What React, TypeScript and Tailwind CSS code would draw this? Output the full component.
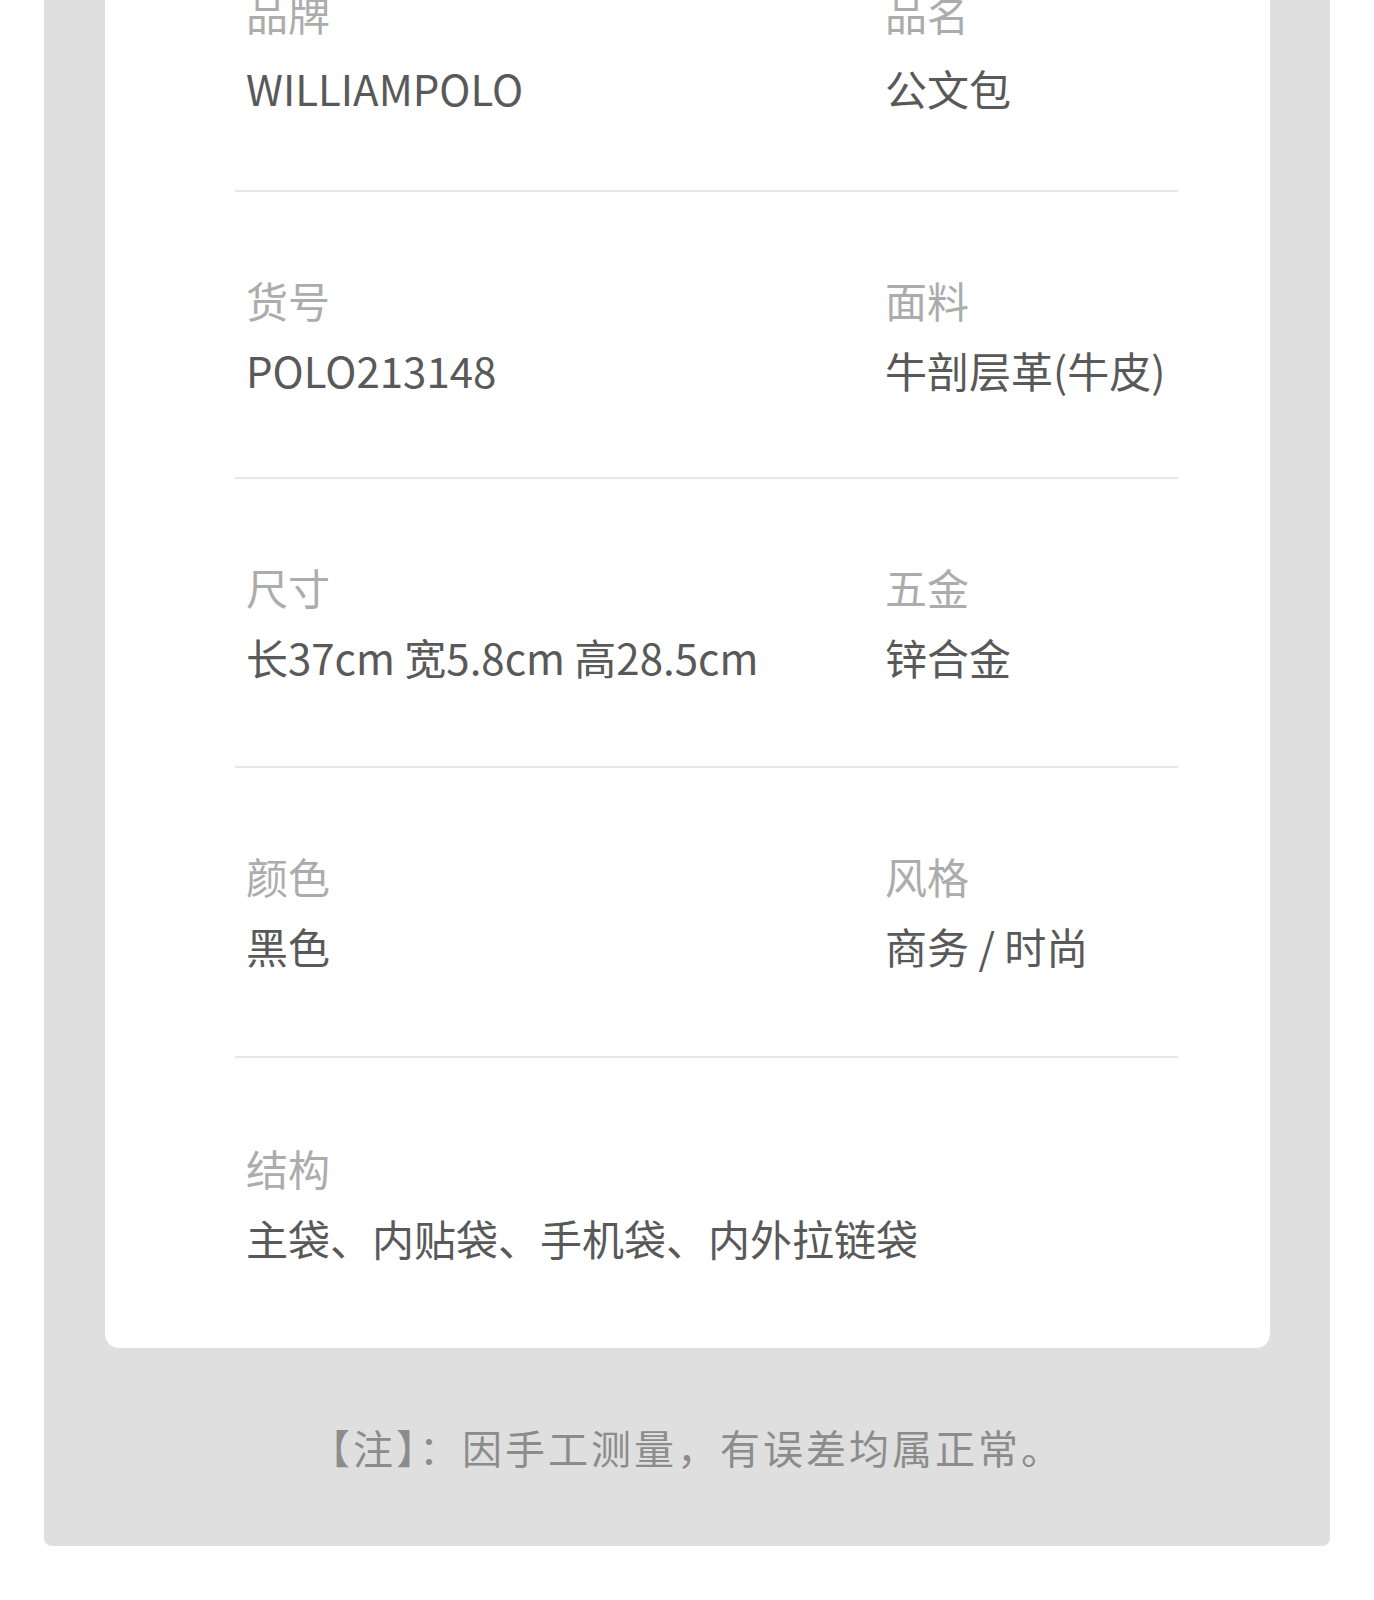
import React from 'react';

type Spec = { label: string; value: string };

const rows: [Spec, Spec | null][] = [
  [{ label: '品牌', value: 'WILLIAMPOLO' }, { label: '品名', value: '公文包' }],
  [{ label: '货号', value: 'POLO213148' }, { label: '面料', value: '牛剖层革(牛皮)' }],
  [{ label: '尺寸', value: '长37cm 宽5.8cm 高28.5cm' }, { label: '五金', value: '锌合金' }],
  [{ label: '颜色', value: '黑色' }, { label: '风格', value: '商务 / 时尚' }],
  [{ label: '结构', value: '主袋、内贴袋、手机袋、内外拉链袋' }, null],
];

// per-row vertical padding
const rowPad = [
  'pt-[91px] pb-[81px]',
  'pt-[87px] pb-[86px]',
  'pt-[87px] pb-[88px]',
  'pt-[87px] pb-[89px]',
  'pt-[89px] pb-[89px]',
];

const Cell: React.FC<{ spec: Spec | null; first: boolean }> = ({ spec, first }) => {
  if (!spec) return <div />;
  return (
    <div className="flex flex-col">
      <span className="text-[42px] leading-[42px] text-[#acacac] whitespace-nowrap">{spec.label}</span>
      <span
        className={
          (first ? 'mt-[33px] ' : 'mt-[28px] ') +
          'text-[42px] leading-[42px] text-[#595959] whitespace-nowrap'
        }
      >
        {spec.value}
      </span>
    </div>
  );
};

export default function App() {
  return (
    <div
      className="w-[1374px] h-[1600px] bg-white overflow-hidden"
      style={{ fontFamily: '"Noto Sans CJK SC", "Noto Sans", sans-serif' }}
    >
      <div className="mx-[44px] -mt-[100px] bg-[#dfdfdf] rounded-b-[8px]">
        <div className="ml-[61px] mr-[60px] bg-white rounded-b-[14px] pt-[1px]">
          <div className="ml-[130px] mr-[92px]">
            {rows.map((row, i) => (
              <div
                key={i}
                className={(i === 0 ? '' : 'border-t-2 border-[#e8e8e8] ') + rowPad[i]}
              >
                <div className="grid grid-cols-[639px_1fr] pl-[11px]">
                  <Cell spec={row[0]} first={i === 0} />
                  <Cell spec={row[1]} first={i === 0} />
                </div>
              </div>
            ))}
          </div>
        </div>
        <div className="h-[198px] flex items-center justify-center">
          <span className="text-[40px] leading-[40px] tracking-[3px] text-[#8c8c8c]">
            【注】：因手工测量，有误差均属正常。
          </span>
        </div>
      </div>
    </div>
  );
}
